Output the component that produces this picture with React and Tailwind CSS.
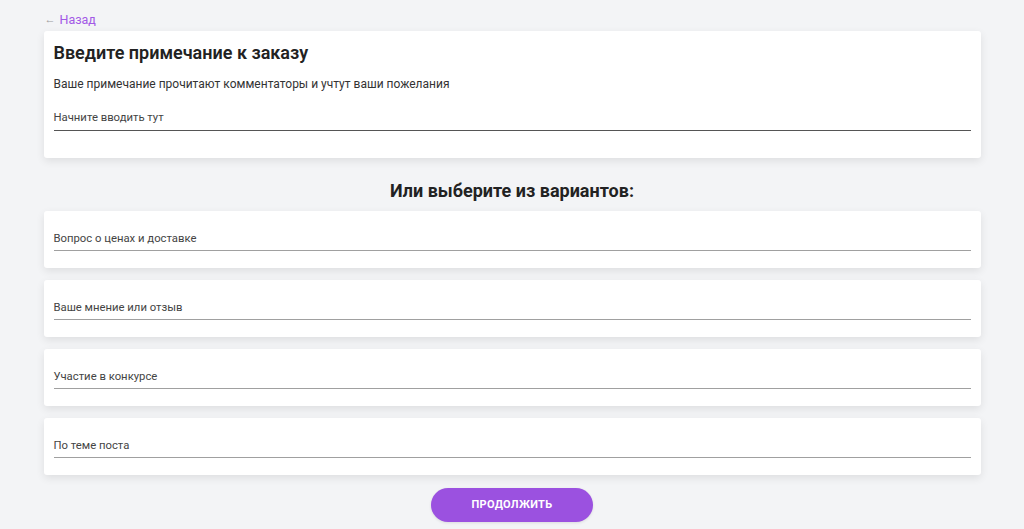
import React from 'react';

const options = [
  'Вопрос о ценах и доставке',
  'Ваше мнение или отзыв',
  'Участие в конкурсе',
  'По теме поста',
];

function OptionCard({ label }) {
  return (
    <div className="h-[57px] bg-white rounded-[3px] shadow-[0_3px_8px_rgba(0,0,0,0.09)] px-[10px] pt-[17px]">
      <div className="border-b border-[#a0a0a0] h-[23px] flex items-center text-[11.3px] text-[#444]">
        {label}
      </div>
    </div>
  );
}

export default function App() {
  return (
    <div className="min-h-screen bg-[#f3f4f6] font-['Roboto',sans-serif]">
      <div className="w-[937px] mx-auto pt-[10px]">
        {/* Back link */}
        <a href="#" className="h-[21px] flex items-center gap-[4px] pl-[1px] text-[12.5px] text-[#a259e6]">
          <span className="text-[#9a9a9a] text-[11px]">←</span>
          Назад
        </a>

        {/* Note card */}
        <div className="h-[127px] bg-white rounded-[3px] shadow-[0_3px_8px_rgba(0,0,0,0.09)] px-[10px] pt-[11px]">
          <h1 className="text-[18px] leading-[22px] font-semibold text-[#222]">Введите примечание к заказу</h1>
          <p className="mt-[12px] text-[12px] leading-[16px] text-[#333]">
            Ваше примечание прочитают комментаторы и учтут ваши пожелания
          </p>
          <div className="mt-[14px] border-b border-[#555] h-[25px] flex items-center text-[11.3px] text-[#444]">
            Начните вводить тут
          </div>
        </div>

        <h2 className="mt-[22px] text-center text-[18px] leading-[22px] font-bold text-[#222]">
          Или выберите из вариантов:
        </h2>

        <div className="mt-[9px] flex flex-col gap-[12px]">
          {options.map((o) => (
            <OptionCard key={o} label={o} />
          ))}
        </div>

        <div className="flex justify-center mt-[13px]">
          <button className="w-[162px] h-[34px] rounded-full bg-[#9b51e0] text-white text-[11px] font-bold tracking-[0.3px] shadow-[0_1px_3px_rgba(0,0,0,0.1)]">
            ПРОДОЛЖИТЬ
          </button>
        </div>
      </div>
    </div>
  );
}
